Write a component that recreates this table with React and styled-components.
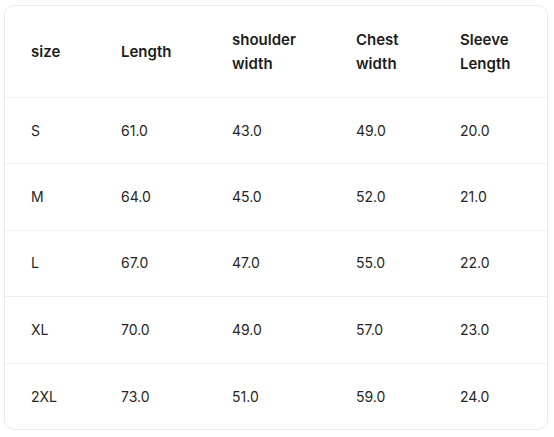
import React from 'react';
import styled, { createGlobalStyle } from 'styled-components';

const GlobalStyle = createGlobalStyle`
  html, body {
    margin: 0;
    padding: 0;
    background: #ffffff;
  }
  body {
    font-family: Inter, "Noto Sans", "Liberation Sans", sans-serif;
    color: #1f1f1f;
  }
  *, *::before, *::after {
    box-sizing: border-box;
  }
`;

const Wrapper = styled.div`
  padding: 5px 6px 8px 4px;
`;

const Card = styled.div`
  width: 544px;
  border: 1px solid #ebebeb;
  border-radius: 10px;
  overflow: hidden;
  background: #fff;
`;

const Table = styled.table`
  width: 100%;
  border-collapse: collapse;
  table-layout: fixed;
`;

const Col = styled.col`
  width: ${p => (p.w ? `${p.w}px` : 'auto')};
`;

const HeadCell = styled.th`
  text-align: left;
  font-size: 15px;
  font-weight: 600;
  line-height: 24px;
  padding: 22px 0 21px 26px;
  vertical-align: middle;
  color: #1c1c1c;
  border-bottom: 1px solid #efefef;
`;

const Row = styled.tr`
  height: 66.4px;
  & + & td {
    border-top: 1px solid #efefef;
  }
`;

const Cell = styled.td`
  font-size: 14px;
  font-weight: 400;
  line-height: 20px;
  padding: 0 0 0 26px;
  vertical-align: middle;
  color: #262626;
`;

const columns = [
  { label: ['size'], w: 90 },
  { label: ['Length'], w: 111 },
  { label: ['shoulder', 'width'], w: 124 },
  { label: ['Chest', 'width'], w: 104 },
  { label: ['Sleeve', 'Length'] },
];

const rows = [
  ['S', '61.0', '43.0', '49.0', '20.0'],
  ['M', '64.0', '45.0', '52.0', '21.0'],
  ['L', '67.0', '47.0', '55.0', '22.0'],
  ['XL', '70.0', '49.0', '57.0', '23.0'],
  ['2XL', '73.0', '51.0', '59.0', '24.0'],
];

const App = () => (
  <Wrapper>
    <GlobalStyle />
    <Card>
      <Table>
        <colgroup>
          {columns.map((c, i) => (
            <Col key={i} w={c.w} />
          ))}
        </colgroup>
        <thead>
          <tr>
            {columns.map((c, i) => (
              <HeadCell key={i}>
                {c.label.map((l, j) => (
                  <React.Fragment key={j}>
                    {j > 0 && <br />}
                    {l}
                  </React.Fragment>
                ))}
              </HeadCell>
            ))}
          </tr>
        </thead>
        <tbody>
          {rows.map((r, i) => (
            <Row key={i}>
              {r.map((v, j) => (
                <Cell key={j}>{v}</Cell>
              ))}
            </Row>
          ))}
        </tbody>
      </Table>
    </Card>
  </Wrapper>
);

export default App;
